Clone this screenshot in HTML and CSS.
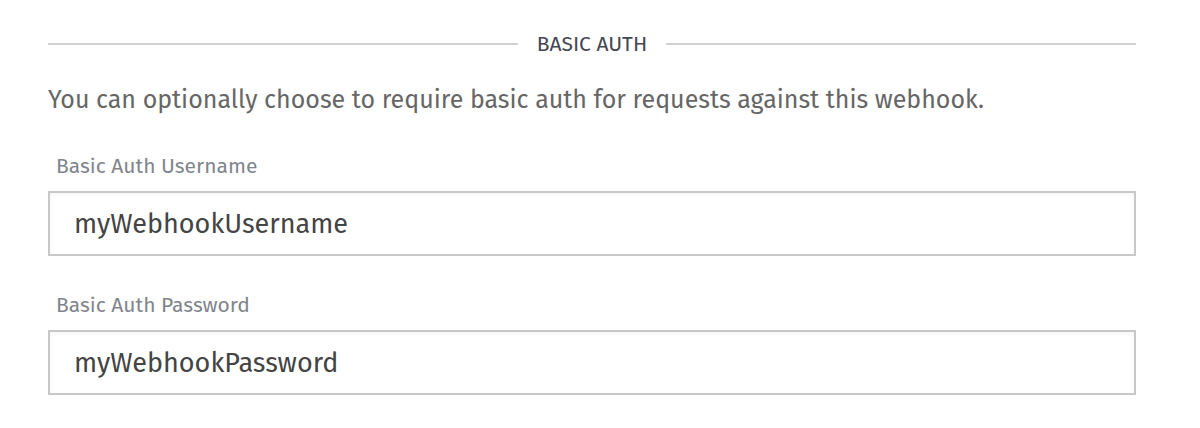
FILE: index.html
```html
<!DOCTYPE html>
<html lang="en">
<head>
<meta charset="utf-8">
<meta name="viewport" content="width=device-width, initial-scale=1">
<title>Basic Auth</title>
<link rel="stylesheet" href="styles.css">
</head>
<body>
<form class="auth">
  <h2 class="auth-title">BASIC AUTH</h2>
  <p class="auth-intro">You can optionally choose to require basic auth for requests against this webhook.</p>
  <div class="field">
    <label class="field-label" for="username">Basic Auth Username</label>
    <input class="field-input" id="username" type="text" value="myWebhookUsername" spellcheck="false">
  </div>
  <div class="field">
    <label class="field-label" for="password">Basic Auth Password</label>
    <input class="field-input" id="password" type="text" value="myWebhookPassword" spellcheck="false">
  </div>
</form>
</body>
</html>
```
FILE: styles.css
```css
* {
  box-sizing: border-box;
}

body {
  margin: 0;
  background: #fff;
  font-family: "Fira Sans", "Noto Sans", sans-serif;
}

.auth {
  padding: 28px 64px 32px 48px;
}

.auth-title {
  display: flex;
  align-items: center;
  gap: 19px;
  margin: 0;
  color: #444752;
  font-size: 21px;
  font-weight: 400;
  line-height: 32px;
}

.auth-title::before,
.auth-title::after {
  content: "";
  flex: 1;
  height: 2px;
  background: #d0d0d0;
}

.auth-intro {
  margin: 22px 0 34px;
  color: #666;
  font-size: 25px;
  line-height: 36px;
}

.field + .field {
  margin-top: 35px;
}

.field-label {
  display: block;
  margin-bottom: 11px;
  padding-left: 8px;
  color: #81858c;
  font-size: 21px;
  line-height: 28px;
}

.field-input {
  display: block;
  width: 100%;
  padding: 13px 24px 11px;
  border: 2px solid #c8c8c8;
  border-radius: 0;
  background: #fff;
  box-shadow: inset 0 2px 4px rgba(0, 0, 0, 0.04);
  color: #444;
  font-family: inherit;
  font-size: 27px;
  line-height: 37px;
  outline: none;
}
```
